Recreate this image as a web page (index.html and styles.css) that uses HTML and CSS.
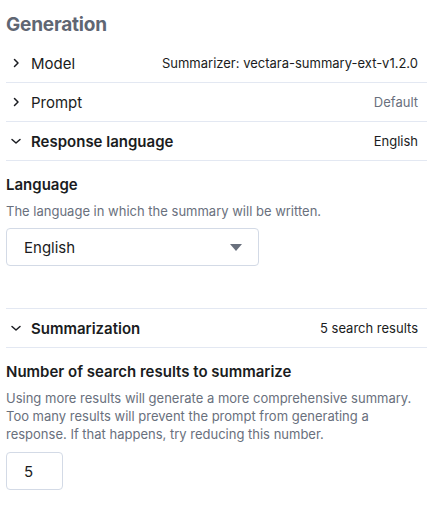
FILE: index.html
```html
<!DOCTYPE html>
<html>
<head>
<meta charset="utf-8">
<link rel="stylesheet" href="styles.css">
</head>
<body>
<div class="panel">
  <h2 class="title">Generation</h2>

  <div class="row">
    <span class="chev"><svg width="16" height="16" viewBox="0 0 16 16"><path d="M6.5 4.5 L10 8 L6.5 11.5" fill="none" stroke="#1a1c21" stroke-width="1.5" stroke-linecap="round" stroke-linejoin="round"/></svg></span>
    <span class="label">Model</span>
    <span class="value">Summarizer: vectara-summary-ext-v1.2.0</span>
  </div>

  <div class="row">
    <span class="chev"><svg width="16" height="16" viewBox="0 0 16 16"><path d="M6.5 4.5 L10 8 L6.5 11.5" fill="none" stroke="#1a1c21" stroke-width="1.5" stroke-linecap="round" stroke-linejoin="round"/></svg></span>
    <span class="label">Prompt</span>
    <span class="value muted">Default</span>
  </div>

  <div class="row">
    <span class="chev"><svg width="16" height="16" viewBox="0 0 16 16"><path d="M4 6.5 L8 10 L12 6.5" fill="none" stroke="#1a1c21" stroke-width="1.5" stroke-linecap="round" stroke-linejoin="round"/></svg></span>
    <span class="label strong">Response language</span>
    <span class="value">English</span>
  </div>

  <div class="section">
    <div class="field-title">Language</div>
    <div class="help">The language in which the summary will be written.</div>
    <div class="select">
      <span>English</span>
      <svg width="12" height="7" viewBox="0 0 12 7"><path d="M0 0 H12 L6 7 Z" fill="#69707d"/></svg>
    </div>
  </div>

  <div class="row">
    <span class="chev"><svg width="16" height="16" viewBox="0 0 16 16"><path d="M4 6.5 L8 10 L12 6.5" fill="none" stroke="#1a1c21" stroke-width="1.5" stroke-linecap="round" stroke-linejoin="round"/></svg></span>
    <span class="label strong">Summarization</span>
    <span class="value">5 search results</span>
  </div>

  <div class="section last">
    <div class="field-title">Number of search results to summarize</div>
    <div class="help multi">Using more results will generate a more comprehensive summary. Too many results will prevent the prompt from generating a response. If that happens, try reducing this number.</div>
    <div class="num">5</div>
  </div>
</div>
</body>
</html>
```

FILE: styles.css
```css
html, body {
  margin: 0;
  padding: 0;
  background: #ffffff;
}
body {
  font-family: Inter, "Noto Sans", sans-serif;
  color: #1a1c21;
}
.panel {
  padding: 13px 13px 0 6px;
}
.title {
  margin: 0 0 7px 0;
  font-size: 19px;
  line-height: 24px;
  font-weight: 700;
  letter-spacing: -0.2px;
  color: #5f6673;
}
.row {
  display: flex;
  align-items: center;
  height: 39px;
  box-sizing: border-box;
  border-bottom: 1px solid #e3e8f2;
}
.chev {
  width: 16px;
  height: 16px;
  margin-left: 2px;
  margin-right: 7px;
  display: flex;
}
.label {
  font-size: 15px;
  font-weight: 400;
  flex: 1;
}
.label.strong {
  font-weight: 600;
}
.value {
  font-size: 13px;
  margin-right: 9px;
  color: #1a1c21;
}
.value.muted {
  color: #69707d;
}
.section {
  padding: 14px 0 42px 0;
  border-bottom: 1px solid #e3e8f2;
}
.section.last {
  border-bottom: none;
  padding-bottom: 10px;
}
.field-title {
  font-size: 15px;
  line-height: 20px;
  font-weight: 600;
  color: #1a1c21;
}
.help {
  margin-top: 7px;
  font-size: 13px;
  line-height: 18px;
  color: #69707d;
}
.select {
  margin-top: 8px;
  width: 253px;
  height: 38px;
  box-sizing: border-box;
  border: 1px solid #d3dae6;
  border-radius: 4px;
  display: flex;
  align-items: center;
  justify-content: space-between;
  padding: 0 16px 0 17px;
  font-size: 15px;
}
.num {
  margin-top: 9px;
  width: 57px;
  height: 38px;
  box-sizing: border-box;
  border: 1px solid #d3dae6;
  border-radius: 4px;
  display: flex;
  align-items: center;
  padding-left: 17px;
  font-size: 15px;
}
```
